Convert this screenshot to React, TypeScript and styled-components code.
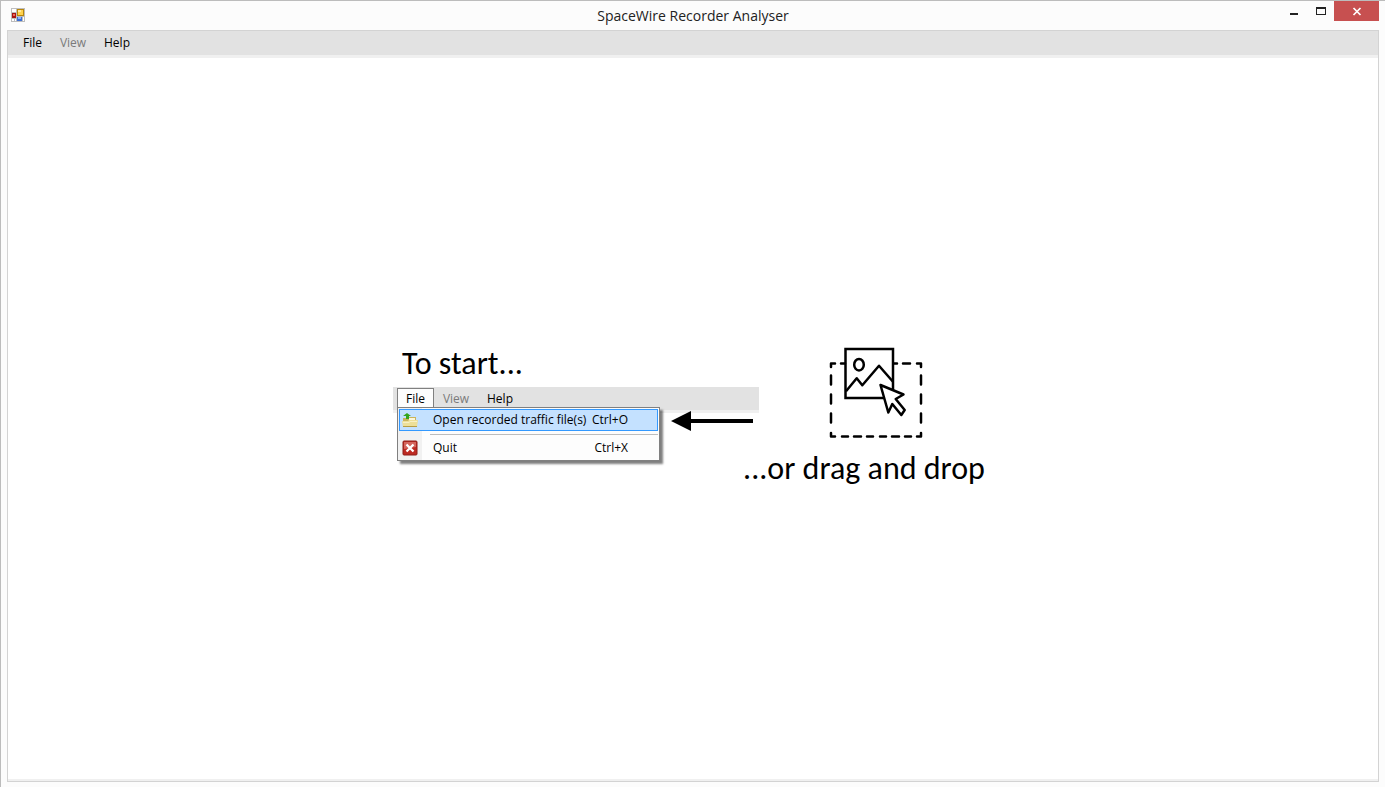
import React from "react";
import styled, { createGlobalStyle } from "styled-components";

const GlobalStyle = createGlobalStyle`
  *, *::before, *::after { box-sizing: border-box; }
  body { margin: 0; background: #fcfcfc; }
  button { font: inherit; color: inherit; border: 0; background: none; padding: 0; margin: 0; }
`;

const Window = styled.div`
  display: flex;
  flex-direction: column;
  min-height: 100vh;
  padding: 0 6px 5px;
  border-top: 1px solid #bcbcbc;
  border-left: 1px solid #bcbcbc;
  background: #fcfcfc;
  color: #000;
  font: 12px/20px "Open Sans", "Noto Sans", sans-serif;
`;

const TitleBar = styled.header`
  display: grid;
  grid-template-columns: 1fr auto 1fr;
  height: 29px;
`;

const AppIcon = styled.svg`
  width: 14px;
  height: 14px;
  margin: 7px 4px;
`;

const Title = styled.h1`
  margin: 0;
  color: #222;
  font-size: 14px;
  font-weight: 400;
  line-height: 29px;
`;

const WindowControls = styled.div`
  display: flex;
  justify-content: flex-end;
`;

const ControlButton = styled.button<{ $close?: boolean }>`
  width: ${(p) => (p.$close ? 45 : 27)}px;
  height: 20px;
  background: ${(p) => (p.$close ? "#c75050" : "transparent")};
  svg { display: block; margin: 0 auto; }
`;

const Frame = styled.div`
  display: flex;
  flex: 1;
  flex-direction: column;
  border: 1px solid #d3d3d3;
  background: #fff;
`;

const MenuBar = styled.nav<{ $inset: number }>`
  display: flex;
  align-items: flex-start;
  height: ${(p) => (p.$inset > 4 ? 27 : 26)}px;
  padding: 1px 0 0 ${(p) => p.$inset}px;
  border-bottom: 3px solid #f0f0f0;
  background: #e2e2e2;
`;

const MenuButton = styled.button<{ $width: number; $open?: boolean }>`
  width: ${(p) => p.$width}px;
  height: 20px;
  border: 1px solid ${(p) => (p.$open ? "#808080" : "transparent")};
  border-bottom: 0;
  background: ${(p) => (p.$open ? "#fdfdfd" : "transparent")};
  line-height: 20px;
  text-align: center;
  &:disabled { color: #7a7a7a; }
`;

const Workspace = styled.main`
  display: flex;
  flex: 1;
  align-items: center;
  justify-content: center;
  border-bottom: 2px solid #f0f0f0;
`;

const Welcome = styled.div`
  display: flex;
  align-items: flex-start;
  width: 600px;
  height: 146px;
`;

const StartColumn = styled.section`
  width: 366px;
`;

const Prompt = styled.h2`
  margin: 0;
  font: 400 32px/36px Carlito, Lato, sans-serif;
  white-space: nowrap;
`;

const StartPrompt = styled(Prompt)`
  padding: 0 0 5px 9px;
`;

const MenuPreview = styled.div`
  position: relative;
`;

const Dropdown = styled.div`
  position: absolute;
  top: 20px;
  left: 4px;
  width: 263px;
  padding: 1px;
  border: 1px solid #808080;
  background: linear-gradient(90deg, #f1f1f1 24px, #fdfdfd 24px);
  box-shadow: 3px 3px 2px rgba(0, 0, 0, 0.5);
`;

const DropdownItem = styled.button<{ $selected?: boolean }>`
  display: flex;
  align-items: center;
  width: 100%;
  height: 22px;
  padding: 0 29px 0 2px;
  border: 1px solid ${(p) => (p.$selected ? "#3399ff" : "transparent")};
  background: ${(p) => (p.$selected ? "#c4e1ff" : "transparent")};
  white-space: nowrap;
  svg { margin-right: 15px; }
`;

const Shortcut = styled.span`
  margin-left: auto;
`;

const Separator = styled.hr`
  height: 1px;
  margin: 3px 0 2px 31px;
  border: 0;
  background: #bdbdbd;
`;

const Arrow = styled.svg`
  position: absolute;
  top: 23px;
  left: 278px;
`;

const DropColumn = styled.section`
  display: flex;
  flex-direction: column;
  align-items: center;
  width: 242px;
  margin-left: -16px;
`;

const DropIcon = styled.svg`
  margin: 0 0 11px 24px;
`;

const menus = [
  { label: "File", width: 37 },
  { label: "View", width: 44, disabled: true },
  { label: "Help", width: 44 },
];

function Menus({ inset, open }: { inset: number; open?: string }) {
  return (
    <MenuBar $inset={inset}>
      {menus.map((m) => (
        <MenuButton key={m.label} type="button" $width={m.width} $open={open === m.label} disabled={m.disabled}>
          {m.label}
        </MenuButton>
      ))}
    </MenuBar>
  );
}

const FolderIcon = () => (
  <svg width="16" height="16" viewBox="0 0 16 16" aria-hidden="true">
    <path d="M1 6h5l1-1h7v9H1z" fill="#c9b35c" />
    <path d="M7 6h6v2H7z" fill="#faf6da" />
    <path d="M0 9h6l1-1h9l-1 7H1z" fill="#eddf98" />
    <path d="M1 10h6l1-1h7v1H8l-1 1H1z" fill="#f8f0c4" />
    <path d="M1 14h14v1H1z" fill="#b89d43" />
    <path d="M5 1l4 3H7v3H4V4H1z" fill="#35a51c" />
  </svg>
);

const QuitIcon = () => (
  <svg width="16" height="16" viewBox="0 0 16 16" aria-hidden="true">
    <rect x="1" y="1" width="14" height="14" rx="1" fill="#bd2a22" stroke="#8e1c17" />
    <path d="M2 2h12v5L2 9z" fill="#d4665d" />
    <path d="M4.500 4.500l7 7M11.500 4.500l-7 7" stroke="#fff" strokeWidth="2.300" />
  </svg>
);

export default function App() {
  return (
    <>
      <GlobalStyle />
      <Window>
        <TitleBar>
          <AppIcon viewBox="0 0 14 14" aria-hidden="true">
            <path d="M0 0h14v14H0z" fill="#bdbdbd" />
            <path d="M1 1h4v3H1zM1 11h2v2H1zM4 11h1v2H4zM12 9h1v4h-1z" fill="#fff" />
            <path d="M1 5h4v5H1z" fill="#a81414" />
            <path d="M2 6h2v2H2z" fill="#ee6a5b" />
            <path d="M6 1h7v7H6z" fill="#b8860b" />
            <path d="M7 2h5v5H7z" fill="#ffd24d" />
            <path d="M7 2h3v2H7z" fill="#ffe9a0" />
            <path d="M6 9h5v4H6z" fill="#3c6fd6" />
            <path d="M7 9h3v2H7z" fill="#8db4f5" />
          </AppIcon>
          <Title>SpaceWire Recorder Analyser</Title>
          <WindowControls>
            <ControlButton type="button" aria-label="Minimise">
              <svg width="27" height="20"><path d="M10 12h8v2h-8z" fill="#222" /></svg>
            </ControlButton>
            <ControlButton type="button" aria-label="Maximise">
              <svg width="27" height="20"><path d="M9 6h10v8H9zM10 8v5h8V8z" fill="#222" fillRule="evenodd" /></svg>
            </ControlButton>
            <ControlButton type="button" aria-label="Close" $close>
              <svg width="45" height="20"><path d="M19.500 7l7 7M26.500 7l-7 7" stroke="#fff" strokeWidth="1.700" /></svg>
            </ControlButton>
          </WindowControls>
        </TitleBar>
        <Frame>
          <Menus inset={6} />
          <Workspace>
            <Welcome>
              <StartColumn>
                <StartPrompt>To start...</StartPrompt>
                <MenuPreview>
                  <Menus inset={4} open="File" />
                  <Dropdown>
                    <DropdownItem type="button" $selected>
                      <FolderIcon />
                      Open recorded traffic file(s)
                      <Shortcut>Ctrl+O</Shortcut>
                    </DropdownItem>
                    <Separator />
                    <DropdownItem type="button">
                      <QuitIcon />
                      Quit
                      <Shortcut>Ctrl+X</Shortcut>
                    </DropdownItem>
                  </Dropdown>
                  <Arrow width="82" height="22" viewBox="0 0 82 22" aria-hidden="true">
                    <path d="M0 11L20 1v20zM19 9h63v4H19z" />
                  </Arrow>
                </MenuPreview>
              </StartColumn>
              <DropColumn>
                <DropIcon width="96" height="94" viewBox="0 0 96 94" fill="none" stroke="#000" strokeWidth="2.500" strokeLinejoin="round" aria-hidden="true">
                  <path strokeLinecap="round" d="M3 21v-3.500h4M13 17.500h4M66 17.500h3M75 17.500h7M89 17.500h4V21M93 87v3.500h-4M7 90.500H3V87M14 90.500h6M26 90.500h7M39 90.500h6M52 90.500h6M64 90.500h7M77 90.500h6M3 29.500v9M3 48.500v9M3 67.500v9M93 29.500v9M93 48.500v9M93 67.500v9" />
                  <rect x="17.500" y="3" width="47.500" height="49" strokeLinejoin="miter" />
                  <ellipse cx="31" cy="18.700" rx="4.800" ry="5.800" />
                  <path d="M18 45.300L28.700 32.300l5.600 7L51 19.700l14 16" />
                  <path d="M52.500 39l23 9.500-7.800 4.500 9 11-3.400 5-9-11-4 8.500z" fill="#fff" />
                </DropIcon>
                <Prompt>...or drag and drop</Prompt>
              </DropColumn>
            </Welcome>
          </Workspace>
        </Frame>
      </Window>
    </>
  );
}
